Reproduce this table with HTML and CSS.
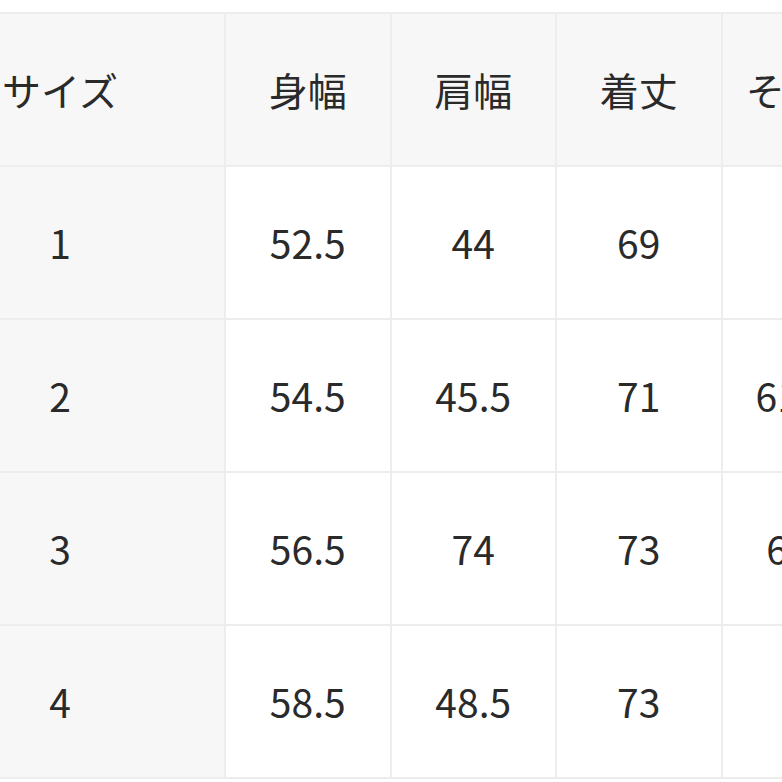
FILE: index.html
```html
<!DOCTYPE html>
<html lang="ja">
<head>
<meta charset="utf-8">
<title>サイズ表</title>
<link rel="stylesheet" href="styles.css">
</head>
<body>
<div class="size-table">
  <div class="cell head">サイズ</div>
  <div class="cell head">身幅</div>
  <div class="cell head">肩幅</div>
  <div class="cell head">着丈</div>
  <div class="cell head">そで丈</div>
  <div class="cell head"></div>

  <div class="cell label">1</div>
  <div class="cell">52.5</div>
  <div class="cell">44</div>
  <div class="cell">69</div>
  <div class="cell">60</div>
  <div class="cell"></div>

  <div class="cell label">2</div>
  <div class="cell">54.5</div>
  <div class="cell">45.5</div>
  <div class="cell">71</div>
  <div class="cell">61.75</div>
  <div class="cell"></div>

  <div class="cell label">3</div>
  <div class="cell">56.5</div>
  <div class="cell">74</div>
  <div class="cell">73</div>
  <div class="cell">63.5</div>
  <div class="cell"></div>

  <div class="cell label">4</div>
  <div class="cell">58.5</div>
  <div class="cell">48.5</div>
  <div class="cell">73</div>
  <div class="cell">64</div>
  <div class="cell"></div>
</div>
</body>
</html>
```

FILE: styles.css
```css
html, body {
  margin: 0;
  padding: 0;
  background: #ffffff;
  overflow: hidden;
}

body {
  width: 782px;
  height: 782px;
  font-family: "Noto Sans CJK JP", "Noto Sans", sans-serif;
  color: #2a2a2a;
}

.size-table {
  display: grid;
  grid-template-columns: 328px repeat(5, 163.5px);
  grid-auto-rows: 151px;
  gap: 2px;
  padding: 2px;
  background: #ededed;
  width: max-content;
  margin-top: 12px;
  margin-left: -106px;
}

.cell {
  display: flex;
  align-items: center;
  justify-content: center;
  background: #ffffff;
  font-size: 39px;
  font-weight: 400;
  line-height: 1;
  white-space: nowrap;
}

.cell.head,
.cell.label {
  background: #f7f7f7;
}
```
